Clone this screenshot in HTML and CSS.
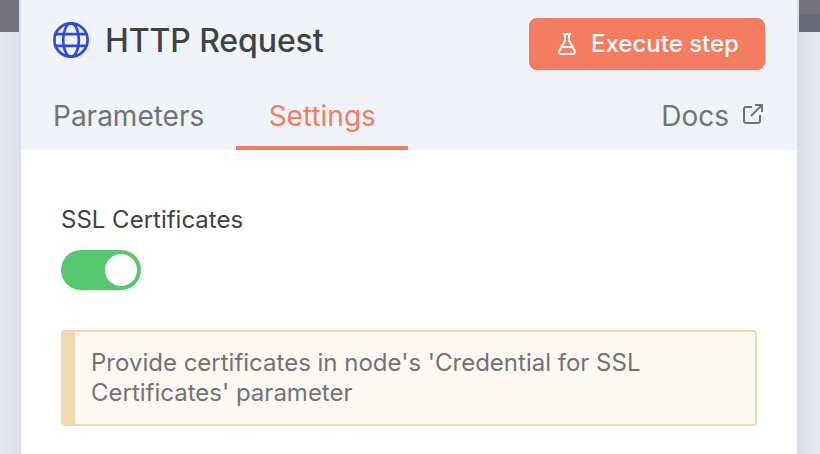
FILE: index.html
```html
<!DOCTYPE html>
<html lang="en">
<head>
  <meta charset="UTF-8">
  <title>HTTP Request</title>
  <link rel="stylesheet" href="styles.css">
</head>
<body>
  <div class="panel">
    <header class="header">
      <div class="title-row">
        <svg class="globe" viewBox="0 0 36 36" fill="none" stroke="#2f48e4" stroke-width="2.7">
          <circle cx="18" cy="18" r="16.6"/>
          <ellipse cx="18" cy="18" rx="7.9" ry="16.6"/>
          <path d="M2.5 12.2h31M2.5 23.8h31"/>
        </svg>
        <h1 class="title">HTTP Request</h1>
        <button class="execute">
          <svg class="flask" viewBox="0 0 24 24" fill="none" stroke="currentColor" stroke-width="2" stroke-linecap="round" stroke-linejoin="round">
            <path d="M14 2v6a2 2 0 0 0 .245.96l5.51 10.08A2 2 0 0 1 18 22H6a2 2 0 0 1-1.755-2.96l5.51-10.08A2 2 0 0 0 10 8V2"/>
            <path d="M6.453 15h11.094M8.5 2h7"/>
          </svg>
          <span>Execute step</span>
        </button>
      </div>
      <nav class="tabs">
        <a class="tab">Parameters</a>
        <a class="tab active">Settings</a>
        <a class="tab docs">
          <span>Docs</span>
          <svg class="external" viewBox="0 0 22 22" fill="none" stroke="currentColor" stroke-width="2">
            <path d="M10 4H4a2 2 0 0 0-2 2v12a2 2 0 0 0 2 2h12a2 2 0 0 0 2-2v-6M13 2h7v7M20 2L9 13"/>
          </svg>
        </a>
      </nav>
    </header>

    <main class="settings">
      <div class="label">SSL Certificates</div>
      <div class="switch"><div class="knob"></div></div>
      <div class="notice">Provide certificates in node's 'Credential for SSL Certificates' parameter</div>
    </main>
  </div>
</body>
</html>
```

FILE: styles.css
```css
* {
  box-sizing: border-box;
}

body {
  margin: 0;
  height: 454px;
  overflow: hidden;
  padding: 0 23px 0 21px;
  background: linear-gradient(#767380, #767380) 0 0 / 40px 32px no-repeat,
    linear-gradient(#767380 14px, #6a6977 14px) 100% 0 / 40px 32px no-repeat,
    linear-gradient(90deg, #e5e8f1 0, #dcdfea 20px, #dcdfea 798px, #e5e8f1 820px);
  font-family: Inter, sans-serif;
}

.panel {
  height: 454px;
  background: #fff;
  box-shadow: 0 0 0 2px #d9dce9;
}

.header {
  height: 150px;
  padding: 18px 32px 0;
  background: #f0f4f9;
}

.title-row {
  display: flex;
  height: 52px;
}

.globe {
  width: 36px;
  height: 36px;
  margin-top: 4px;
}

.title {
  margin: 2px 0 0 16px;
  font-size: 32px;
  font-weight: 500;
  line-height: 42px;
  letter-spacing: -0.1px;
  color: #414244;
}

.execute {
  display: flex;
  align-items: center;
  width: 236px;
  margin-left: auto;
  padding: 0 0 1px 26px;
  border: 0;
  border-radius: 8px;
  background: #f47c60;
  color: #fff;
  font: 500 24px/30px Inter, sans-serif;
}

.flask {
  width: 24px;
  height: 26px;
  margin-right: 12px;
}

.tabs {
  display: flex;
  height: 80px;
}

.tab {
  padding-top: 26px;
  font-size: 28px;
  line-height: 40px;
  color: #717377;
}

.active {
  width: 172px;
  margin-left: 32px;
  border-bottom: 4px solid #f47c60;
  text-align: center;
  color: #f47c60;
}

.docs {
  display: flex;
  margin-left: auto;
}

.external {
  width: 22px;
  height: 22px;
  margin: 7px 1px 0 13px;
}

.settings {
  padding: 54px 40px 0;
}

.label {
  font-size: 24px;
  line-height: 32px;
  color: #414244;
}

.switch {
  width: 80px;
  height: 40px;
  margin-top: 14px;
  padding: 4px;
  border-radius: 20px;
  background: #57c770;
}

.knob {
  width: 32px;
  height: 32px;
  margin-left: auto;
  border-radius: 50%;
  background: #fff;
}

.notice {
  height: 96px;
  margin-top: 40px;
  padding: 16px 80px 0 16px;
  border: 2px solid #f2d8b0;
  border-left-width: 14px;
  border-radius: 4px;
  background: #fdf8f2;
  font-size: 24px;
  line-height: 30px;
  color: #717377;
}
```
